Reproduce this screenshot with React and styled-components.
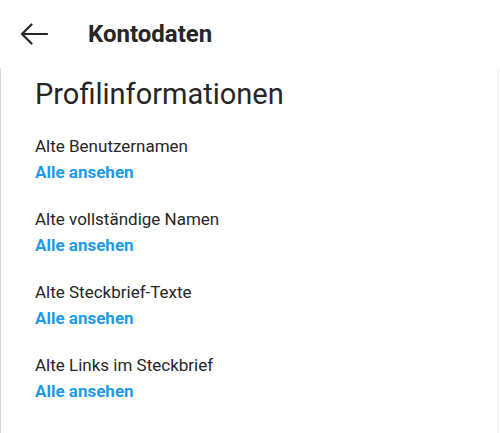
import React from "react";
import styled, { createGlobalStyle } from "styled-components";

const Global = createGlobalStyle`
  html, body { margin: 0; padding: 0; background: #fff; }
  body { font-family: Roboto, "Noto Sans", sans-serif; color: #262626; }
`;

const Page = styled.div`
  width: 500px;
  height: 433px;
  display: flex;
  flex-direction: column;
  overflow: hidden;
`;

const Header = styled.header`
  height: 68px;
  display: flex;
  align-items: center;
  padding-left: 19px;
  box-sizing: border-box;
  flex-shrink: 0;
`;

const BackButton = styled.button`
  border: 0;
  background: none;
  padding: 0;
  width: 30px;
  height: 30px;
  display: flex;
  align-items: center;
  justify-content: center;
  color: #262626;
  margin-right: 39px;
`;

const Title = styled.h1`
  margin: 0;
  font-size: 24px;
  font-weight: 700;
  color: #262626;
  letter-spacing: 0;
`;

const Panel = styled.main`
  flex: 1;
  width: 499px;
  box-sizing: border-box;
  border-left: 1px solid #dbdbdb;
  border-right: 1px solid #efefef;
  padding: 8px 0 0 34px;
`;

const SectionTitle = styled.h2`
  margin: 0 0 22px;
  font-size: 29px;
  font-weight: 400;
  color: #262626;
  line-height: 36px;
`;

const Group = styled.div`
  display: flex;
  flex-direction: column;
  margin-bottom: 23px;
`;

const Label = styled.div`
  font-size: 17px;
  line-height: 24px;
  color: #262626;
`;

const Link = styled.a`
  font-size: 17px;
  line-height: 24px;
  font-weight: 700;
  color: #1d9be9;
  text-decoration: none;
  margin-top: 2px;
`;

const items = [
  "Alte Benutzernamen",
  "Alte vollständige Namen",
  "Alte Steckbrief-Texte",
  "Alte Links im Steckbrief",
];

export default function App() {
  return (
    <>
      <Global />
      <Page>
        <Header>
          <BackButton aria-label="Zurück">
            <svg width="28" height="22" viewBox="0 0 28 22" fill="none">
              <path d="M27 11H2M11.5 1.5L2 11l9.5 9.5" stroke="#262626" strokeWidth="2.2" strokeLinecap="round" strokeLinejoin="round" />
            </svg>
          </BackButton>
          <Title>Kontodaten</Title>
        </Header>
        <Panel>
          <SectionTitle>Profilinformationen</SectionTitle>
          {items.map((t) => (
            <Group key={t}>
              <Label>{t}</Label>
              <Link href="#">Alle ansehen</Link>
            </Group>
          ))}
        </Panel>
      </Page>
    </>
  );
}
